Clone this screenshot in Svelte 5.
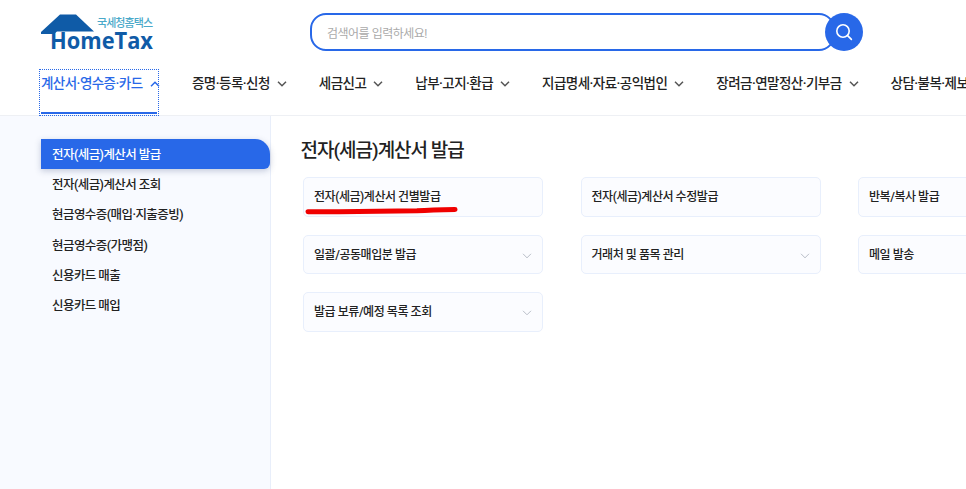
<script>
    const navItems = [
        { label: '계산서·영수증·카드', active: true },
        { label: '증명·등록·신청' },
        { label: '세금신고' },
        { label: '납부·고지·환급' },
        { label: '지급명세·자료·공익법인' },
        { label: '장려금·연말정산·기부금' },
        { label: '상담·불복·제보' }
    ];

    const sideItems = [
        '전자(세금)계산서 발급',
        '전자(세금)계산서 조회',
        '현금영수증(매입·지출증빙)',
        '현금영수증(가맹점)',
        '신용카드 매출',
        '신용카드 매입'
    ];

    const cards = [
        { label: '전자(세금)계산서 건별발급', marked: true },
        { label: '전자(세금)계산서 수정발급' },
        { label: '반복/복사 발급' },
        { label: '일괄/공동매입분 발급', more: true },
        { label: '거래처 및 품목 관리', more: true },
        { label: '메일 발송' },
        { label: '발급 보류/예정 목록 조회', more: true }
    ];
</script>

<div class="page">
    <header>
        <div class="top">
            <svg class="logo" width="114" height="44" viewBox="0 0 114 44" aria-label="HomeTax">
                <path d="M1 18 L20 .5 H36 L54 17.5 H17 L14 20 H1 Z" fill="#0f5ba7" />
                <text x="57" y="12.5" class="logo-kr" textLength="56">국세청홈택스</text>
                <text x="10" y="35" class="logo-en" textLength="103" lengthAdjust="spacingAndGlyphs">HomeTax</text>
            </svg>
            <div class="search">
                <div class="search-box">검색어를 입력하세요!</div>
                <button class="search-btn" aria-label="검색">
                    <svg width="18" height="18" viewBox="0 0 18 18" fill="none" stroke="#fff" stroke-width="1.6" stroke-linecap="round">
                        <circle cx="8" cy="8" r="6.2" />
                        <path d="M12.6 12.6 L16.4 16.4" />
                    </svg>
                </button>
            </div>
        </div>
        <nav>
            {#each navItems as item}
                <div class="nav-item" class:active={item.active}>
                    <span>{item.label}</span>
                    <svg width="10" height="6" viewBox="0 0 10 6" fill="none" stroke="currentColor" stroke-width="1.5">
                        {#if item.active}
                            <path d="M1 5.2 L5 1.2 L9 5.2" />
                        {:else}
                            <path d="M1 .8 L5 4.8 L9 .8" />
                        {/if}
                    </svg>
                </div>
            {/each}
        </nav>
    </header>

    <div class="body">
        <aside>
            {#each sideItems as item, i}
                <div class="side-item" class:current={i === 0}>{item}</div>
            {/each}
        </aside>
        <main>
            <h1>전자(세금)계산서 발급</h1>
            <div class="cards">
                {#each cards as card}
                    <div class="card">
                        <span>{card.label}</span>
                        {#if card.more}
                            <svg class="more" width="10" height="6" viewBox="0 0 10 6" fill="none" stroke="#b9bec8" stroke-width="1">
                                <path d="M1 .8 L5 4.8 L9 .8" />
                            </svg>
                        {/if}
                        {#if card.marked}
                            <svg class="mark" width="156" height="10" viewBox="0 0 156 10" fill="none" stroke="#f00000" stroke-width="5" stroke-linecap="round">
                                <path d="M3 6.8 C40 6.6 80 6.4 112 5.8 C126 4.8 138 4.6 150 4.4" />
                            </svg>
                        {/if}
                    </div>
                {/each}
            </div>
        </main>
    </div>
</div>

<style>
    :global(body) {
        margin: 0;
        background: #fff;
    }

    .page {
        width: 966px;
        height: 489px;
        overflow: hidden;
        display: flex;
        flex-direction: column;
        font-family: Roboto, "Noto Sans CJK KR", sans-serif;
        color: #222;
    }

    header {
        height: 116px;
        flex: none;
        box-sizing: border-box;
        border-bottom: 1px solid #eef0f4;
    }

    .top {
        height: 64px;
        display: flex;
        align-items: flex-start;
        padding-left: 40px;
    }

    .logo {
        margin-top: 14px;
        flex: none;
    }

    .logo-kr {
        font-size: 11px;
        font-weight: 500;
        fill: #4aa9c9;
    }

    .logo-en {
        font-family: "Open Sans", sans-serif;
        font-size: 23px;
        font-weight: 700;
        fill: #0f5ba7;
    }

    .search {
        margin: 13px 0 0 156px;
        display: flex;
        align-items: center;
    }

    .search-box {
        width: 525px;
        height: 38px;
        box-sizing: border-box;
        border: 2px solid #2868e8;
        border-radius: 16px;
        padding-left: 15px;
        display: flex;
        align-items: center;
        font-size: 12px;
        letter-spacing: -0.5px;
        color: #aaa;
    }

    .search-btn {
        width: 38px;
        height: 38px;
        margin-left: -10px;
        padding: 0;
        border: none;
        border-radius: 50%;
        background: #2868e8;
        display: flex;
        align-items: center;
        justify-content: center;
        position: relative;
    }

    nav {
        display: flex;
        gap: 32px;
        padding-left: 41px;
        white-space: nowrap;
    }

    .nav-item {
        height: 43px;
        margin-top: 7px;
        box-sizing: border-box;
        padding-top: 2px;
        display: flex;
        align-items: flex-start;
        gap: 7px;
        font-size: 13.5px;
        line-height: 20px;
        font-weight: 500;
        letter-spacing: -0.55px;
        color: #222;
        flex: none;
    }

    .nav-item svg {
        flex: none;
        margin-top: 8px;
        color: #555;
    }

    .nav-item.active {
        width: 116px;
        margin-right: 3px;
        color: #2868e8;
        border-bottom: 2px solid #2868e8;
        outline: 1px dotted #2868e8;
        outline-offset: 1px;
    }

    .nav-item.active svg {
        color: #2868e8;
    }

    .body {
        flex: 1;
        display: flex;
        min-height: 0;
    }

    aside {
        width: 271px;
        flex: none;
        box-sizing: border-box;
        background: #f8faff;
        border-right: 1px solid #e8eefa;
        padding: 23px 0 0 41px;
    }

    .side-item {
        height: 30.3px;
        box-sizing: border-box;
        padding: 0 0 2px 11px;
        display: flex;
        align-items: center;
        font-size: 12.5px;
        font-weight: 500;
        letter-spacing: -0.55px;
        color: #222;
    }

    .side-item.current {
        background: #2868e8;
        color: #fff;
        border-radius: 0 15px 6px 0;
        box-shadow: 0 2px 6px rgba(40, 60, 110, 0.25);
    }

    main {
        flex: 1;
        padding: 22px 0 0 30px;
        min-width: 0;
    }

    h1 {
        margin: 0 0 13px -0.5px;
        font-size: 19px;
        line-height: 26px;
        font-weight: 500;
        letter-spacing: -1px;
        color: #222;
    }

    .cards {
        display: grid;
        grid-template-columns: repeat(3, 240px);
        column-gap: 37.5px;
        row-gap: 18px;
        margin-left: 2px;
    }

    .card {
        position: relative;
        height: 39.5px;
        box-sizing: border-box;
        display: flex;
        align-items: center;
        justify-content: space-between;
        padding: 0 10px 2px 10px;
        background: #fbfcff;
        border: 1px solid #e8effc;
        border-radius: 5px;
        font-size: 12px;
        font-weight: 500;
        letter-spacing: -0.45px;
        color: #222;
    }

    .more {
        margin-top: 5px;
    }

    .mark {
        position: absolute;
        left: 1px;
        top: 27px;
    }
</style>
